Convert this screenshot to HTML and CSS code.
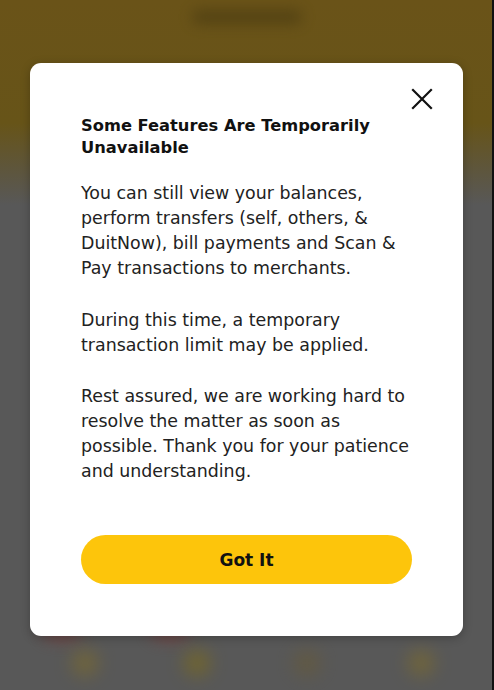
FILE: index.html
```html
<!DOCTYPE html>
<html>
<head>
<meta charset="utf-8">
<link rel="stylesheet" href="styles.css">
</head>
<body>
<div class="app">
  <div class="app-header"><div class="app-title"></div></div>
  <div class="app-body"></div>
  <div class="app-nav">
    <span class="blob red b1"></span><span class="blob red b2"></span>
    <span class="dot d1"></span><span class="dot d2"></span><span class="dot d3"></span><span class="dot d4"></span>
  </div>
  <div class="edge"></div>
</div>
<div class="overlay">
  <div class="modal">
    <button class="close" aria-label="Close">
      <svg width="24" height="24" viewBox="0 0 24 24"><path d="M3 3 L21 21 M21 3 L3 21" stroke="#111" stroke-width="2.2" stroke-linecap="square" fill="none"/></svg>
    </button>
    <h2 class="title">Some Features Are Temporarily<br>Unavailable</h2>
    <p class="text">You can still view your balances,<br>perform transfers (self, others, &amp;<br>DuitNow), bill payments and Scan &amp;<br>Pay transactions to merchants.</p>
    <p class="text">During this time, a temporary<br>transaction limit may be applied.</p>
    <p class="text">Rest assured, we are working hard to<br>resolve the matter as soon as<br>possible. Thank you for your patience<br>and understanding.</p>
    <button class="cta">Got It</button>
  </div>
</div>
</body>
</html>
```
FILE: styles.css
```css
html, body { margin: 0; padding: 0; }
body {
  width: 494px; height: 690px; overflow: hidden;
  background: #585858;
  font-family: "DejaVu Sans", "Open Sans", sans-serif;
  position: relative;
}
.app { position: absolute; inset: 0; display: flex; flex-direction: column; background: #585858; }
.app-header {
  height: 205px;
  background: linear-gradient(180deg, #6a5318 0%, #675418 60%, #5d5640 85%, #585858 100%);
  display: flex; justify-content: center;
}
.app-title { width: 110px; height: 14px; margin-top: 10px; background: #4e3e12; border-radius: 8px; filter: blur(7px); opacity: 0.8; }
.app-body { flex: 1; }
.app-nav { height: 60px; position: relative; }
.blob { position: absolute; border-radius: 50%; filter: blur(8px); }
.red { width: 40px; height: 14px; background: #7a3c3a; top: -4px; opacity: 0.8; }
.b1 { left: 42px; } .b2 { left: 150px; }
.dot { position: absolute; width: 26px; height: 26px; border-radius: 50%; top: 20px; filter: blur(9px); opacity: 0.75; }
.d1 { left: 72px; background: #7a6a30; }
.d2 { left: 184px; background: #7a6a20; }
.d3 { left: 294px; background: #665a3a; }
.d4 { left: 408px; background: #7a6a30; }
.edge { position: absolute; right: 0; top: 0; bottom: 0; width: 2px; background: #111; }

.overlay { position: absolute; inset: 0; display: flex; justify-content: center; padding-top: 63px; }
.modal {
  position: relative;
  box-sizing: border-box;
  width: 433px; height: 573px;
  margin-left: -1px;
  background: #fff;
  border-radius: 11px;
  box-shadow: 0 2px 10px rgba(0,0,0,0.25);
  padding: 52px 40px 52px 51px;
  display: flex; flex-direction: column;
}
.close {
  position: absolute; top: 24px; right: 29px;
  width: 24px; height: 24px; padding: 0; border: 0; background: none;
}
.close svg { display: block; }
.title {
  margin: 0 0 22px;
  font-size: 16.3px; line-height: 22px; font-weight: bold;
  color: #111;
  white-space: nowrap;
}
.text {
  margin: 0 0 26.5px;
  font-size: 17.4px; line-height: 25px;
  color: #222;
  white-space: nowrap;
}
.text:last-of-type { margin-bottom: 0; }
.cta {
  margin-top: auto;
  height: 49px; width: 331px;
  border: 0; border-radius: 25px;
  background: #fdc50b;
  font-family: inherit; font-weight: bold; font-size: 17px; color: #111;
}
```
